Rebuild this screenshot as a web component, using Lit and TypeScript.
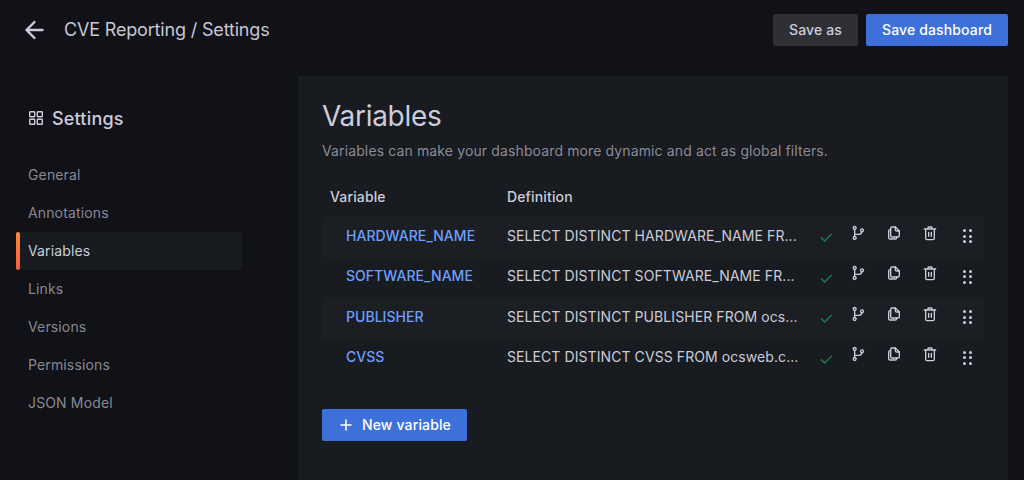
import { LitElement, html, css, svg } from 'lit';
import { customElement } from 'lit/decorators.js';

const NAV = ['General', 'Annotations', 'Variables', 'Links', 'Versions', 'Permissions', 'JSON Model'];

const VARS = [
  { name: 'HARDWARE_NAME', def: 'SELECT DISTINCT HARDWARE_NAME FR...' },
  { name: 'SOFTWARE_NAME', def: 'SELECT DISTINCT SOFTWARE_NAME FR...' },
  { name: 'PUBLISHER', def: 'SELECT DISTINCT PUBLISHER FROM ocs...' },
  { name: 'CVSS', def: 'SELECT DISTINCT CVSS FROM ocsweb.c...' },
];

const icon = (body: unknown, size = 16) => html`
  <svg width="${size}" height="${size}" viewBox="0 0 24 24" fill="none" stroke="currentColor"
       stroke-width="2" stroke-linecap="round" stroke-linejoin="round">${body}</svg>
`;

const branchIcon = svg`
  <circle cx="7" cy="4.5" r="2.2"/><circle cx="7" cy="19.5" r="2.2"/><circle cx="18" cy="8" r="2.2"/>
  <path d="M7 6.7v10.6M7 14h6a5 5 0 0 0 5-4"/>
`;
const copyIcon = svg`
  <path d="M9 3h5l6 6v7a2 2 0 0 1-2 2H9a2 2 0 0 1-2-2V5a2 2 0 0 1 2-2z"/>
  <path d="M14 3v4a2 2 0 0 0 2 2h4"/>
  <path d="M7 7H6a2 2 0 0 0-2 2v10a2 2 0 0 0 2 2h8a2 2 0 0 0 2-2v-1"/>
`;
const trashIcon = svg`
  <path d="M3.5 6h17M9 6V4a1 1 0 0 1 1-1h4a1 1 0 0 1 1 1v2"/>
  <path d="M5.5 6v14a2 2 0 0 0 2 2h9a2 2 0 0 0 2-2V6"/>
  <path d="M10 11v6M14 11v6"/>
`;

@customElement('app-root')
export class AppRoot extends LitElement {
  static styles = css`
    :host {
      display: block;
      width: 1024px;
      height: 480px;
      overflow: hidden;
      background: #111217;
      color: #ccccdc;
      font-family: Inter, 'Noto Sans', sans-serif;
      font-size: 14px;
      letter-spacing: 0.01em;
    }

    .topbar {
      display: flex;
      align-items: center;
      height: 32px;
      padding: 14px 16px 30px 24px;
    }

    .back {
      display: flex;
      margin-right: 16px;
      color: #ccccdc;
    }

    .crumb {
      flex: 1;
      font-size: 18px;
      letter-spacing: -0.17px;
      padding-bottom: 2px;
      color: #c7c7d4;
    }

    .btn {
      display: flex;
      align-items: center;
      height: 32px;
      padding: 0 16px 1px;
      border-radius: 2px;
      font-weight: 500;
      box-sizing: border-box;
    }

    .btn-primary {
      background: #3d71d9;
      color: #fff;
    }

    .btn-secondary {
      background: #2e3036;
      color: #ccccdc;
      margin-right: 8px;
    }

    .body {
      display: flex;
      height: 404px;
    }

    .side {
      width: 298px;
      flex: none;
      box-sizing: border-box;
      padding: 30px 56px 0 16px;
    }

    .side-title {
      display: flex;
      align-items: center;
      gap: 8px;
      height: 24px;
      padding-left: 12px;
      margin-bottom: 26px;
      font-size: 18px;
      font-weight: 500;
      letter-spacing: 0.18px;
      color: #ccccdc;
    }

    .nav-item {
      display: flex;
      align-items: center;
      height: 38px;
      box-sizing: border-box;
      padding: 0 0 2px 12px;
      color: rgba(204, 204, 220, 0.65);
      position: relative;
    }

    .nav-item.active {
      background: #181b1f;
      color: #ccccdc;
      border-radius: 2px;
    }

    .nav-item.active::before {
      content: '';
      position: absolute;
      left: 0;
      top: 0;
      bottom: 0;
      width: 4px;
      border-radius: 2px;
      background: linear-gradient(0deg, #f55f3e, #ff8833);
    }

    .panel {
      width: 710px;
      background: #181b1f;
      box-sizing: border-box;
      padding: 22px 24px 0;
    }

    h1 {
      margin: 0;
      font-size: 28px;
      font-weight: 400;
      line-height: 36px;
      letter-spacing: -0.3px;
      color: #ccccdc;
    }

    .sub {
      margin-top: 8px;
      line-height: 18px;
      letter-spacing: 0.125px;
      color: rgba(204, 204, 220, 0.65);
    }

    .table-head {
      display: flex;
      height: 20px;
      margin-top: 27px;
      margin-bottom: 10px;
      line-height: 20px;
      font-weight: 500;
      padding-left: 8px;
    }

    .table-head .h1 {
      width: 177px;
    }

    .row {
      display: flex;
      align-items: center;
      height: 40.5px;
      box-sizing: border-box;
      padding-bottom: 3.9px;
      width: 662px;
      background: #181b1f;
    }

    .row:nth-child(odd) {
      background: #1b1e22;
    }

    .name {
      width: 185px;
      flex: none;
      box-sizing: border-box;
      padding-left: 24px;
      color: #6e9fff;
      font-weight: 500;
      letter-spacing: 0.03px;
    }

    .def {
      width: 311px;
      flex: none;
      white-space: nowrap;
      overflow: hidden;
      letter-spacing: 0.08px;
    }

    .check {
      display: flex;
      width: 32px;
      flex: none;
      margin-top: 4px;
      color: #1a7f4b;
    }

    .actions {
      display: flex;
      align-items: center;
      color: #ccccdc;
      margin-top: -5px;
    }

    .actions span {
      display: flex;
      width: 36px;
      flex: none;
    }

    .drag {
      display: grid;
      grid-template-columns: 3px 3px;
      gap: 2.5px;
      margin-left: 5px;
      margin-top: 2px;
    }

    .drag i {
      width: 3px;
      height: 3px;
      border-radius: 50%;
      background: #ccccdc;
    }

    .add {
      display: inline-flex;
      gap: 8px;
      margin-top: 30px;
    }
  `;

  render() {
    return html`
      <div class="topbar">
        <span class="back">
          <svg width="24" height="24" viewBox="0 0 24 24" fill="none" stroke="currentColor"
               stroke-width="2.4" stroke-linecap="round" stroke-linejoin="round">
            <path d="M18.5 12H2.5M10.5 4l-8 8 8 8"/>
          </svg>
        </span>
        <span class="crumb">CVE Reporting / Settings</span>
        <span class="btn btn-secondary">Save as</span>
        <span class="btn btn-primary">Save dashboard</span>
      </div>
      <div class="body">
        <div class="side">
          <div class="side-title">
            <svg width="16" height="16" viewBox="0 0 16 16" fill="none" stroke="currentColor" stroke-width="1.4">
              <rect x="1.7" y="1.7" width="5" height="5" rx=".6"/><rect x="9.3" y="1.7" width="5" height="5" rx=".6"/>
              <rect x="1.7" y="9.3" width="5" height="5" rx=".6"/><rect x="9.3" y="9.3" width="5" height="5" rx=".6"/>
            </svg>
            Settings
          </div>
          ${NAV.map(n => html`<div class="nav-item ${n === 'Variables' ? 'active' : ''}">${n}</div>`)}
        </div>
        <div class="panel">
          <h1>Variables</h1>
          <div class="sub">Variables can make your dashboard more dynamic and act as global filters.</div>
          <div class="table-head"><span class="h1">Variable</span><span>Definition</span></div>
          <div>
            ${VARS.map(v => html`
              <div class="row">
                <span class="name">${v.name}</span>
                <span class="def">${v.def}</span>
                <span class="check">
                  <svg width="16" height="16" viewBox="0 0 24 24" fill="none" stroke="currentColor" stroke-width="2" stroke-linecap="round">
                    <path d="M5 13l5 5 10-10"/>
                  </svg>
                </span>
                <span class="actions">
                  <span>${icon(branchIcon)}</span>
                  <span>${icon(copyIcon)}</span>
                  <span>${icon(trashIcon)}</span>
                </span>
                <div class="drag">${[0, 1, 2, 3, 4, 5].map(() => html`<i></i>`)}</div>
              </div>
            `)}
          </div>
          <span class="btn btn-primary add">
            <svg width="16" height="16" viewBox="0 0 16 16" stroke="currentColor" stroke-width="1.6" stroke-linecap="round">
              <path d="M8 3v10M3 8h10"/>
            </svg>
            New variable
          </span>
        </div>
      </div>
    `;
  }
}
